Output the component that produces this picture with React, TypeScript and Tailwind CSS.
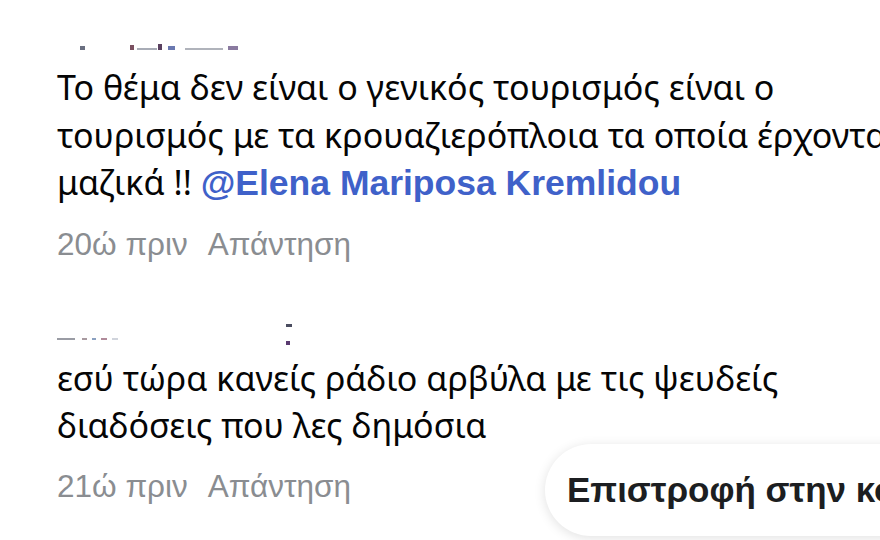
import React from 'react';

const body = { fontFamily: '"Noto Sans", "Open Sans", sans-serif' };
const arial = { fontFamily: '"Liberation Sans", Arial, sans-serif' };

function Meta({ time }: { time: string }) {
  return (
    <div className="flex items-center gap-[20px] text-[31.5px] leading-[36px] text-[#8a8d91]" style={arial}>
      <span>{time}</span>
      <span>Απάντηση</span>
    </div>
  );
}

// faint leftovers of a hidden author name
function Smudges({ marks }: { marks: [number, number, number, string][] }) {
  return (
    <div className="flex items-end">
      {marks.map(([gap, w, h, c], i) => (
        <span key={i} className="block" style={{ marginLeft: gap, width: w, height: h, background: c }} />
      ))}
    </div>
  );
}

export default function App() {
  return (
    <div className="relative w-[880px] h-[540px] overflow-hidden bg-white">
      <div className="pl-[57px] flex flex-col">
        <div className="h-[64px] flex flex-col justify-end pb-[14px]">
          <Smudges
            marks={[
              [23, 5, 4, '#6a6f80'],
              [45, 4, 5, '#7a5060'],
              [3, 20, 2, '#a8acb6'],
              [1, 4, 6, '#5a4060'],
              [6, 7, 4, '#6a78b0'],
              [10, 38, 2, '#b0b3bb'],
              [5, 10, 4, '#8a7aa0'],
            ]}
          />
        </div>
        <div className="text-[34px] leading-[47.5px] text-[#050505]" style={body}>
          <div className="whitespace-nowrap">Το θέμα δεν είναι ο γενικός τουρισμός είναι ο</div>
          <div className="whitespace-nowrap">τουρισμός με τα κρουαζιερόπλοια τα οποία έρχονται</div>
          <div className="whitespace-nowrap">
            μαζικά !!{' '}
            <span className="font-bold text-[35.5px] text-[#3f61c9]" style={arial}>@Elena Mariposa Kremlidou</span>
          </div>
        </div>
        <div className="mt-[18px]">
          <Meta time="20ώ πριν" />
        </div>

        <div className="h-[93px] flex items-end pb-[10px]">
          <div className="flex items-end">
            <div className="pb-[5px]">
              <Smudges
                marks={[
                  [0, 18, 2, '#9a9ca4'],
                  [7, 5, 2, '#a89aa0'],
                  [5, 4, 2, '#8aa0c0'],
                  [5, 6, 2, '#b08a9a'],
                  [5, 6, 2, '#d0d4dc'],
                ]}
              />
            </div>
            <div className="ml-[168px] flex flex-col gap-[14px]">
              <span className="block w-[6px] h-[3px] bg-[#4a4d60]" />
              <span className="block w-[4px] h-[4px] bg-[#5a3a70]" />
            </div>
          </div>
        </div>
        <div className="text-[34px] leading-[47.5px] text-[#050505]" style={body}>
          <div className="whitespace-nowrap">εσύ τώρα κανείς ράδιο αρβύλα με τις ψευδείς</div>
          <div className="whitespace-nowrap">διαδόσεις που λες δημόσια</div>
        </div>
        <div className="mt-[18px]">
          <Meta time="21ώ πριν" />
        </div>
      </div>

      <div
        className="absolute left-[545px] top-[444px] h-[92px] w-[400px] pl-[22px] flex items-center rounded-full bg-white shadow-[0_2px_12px_rgba(0,0,0,0.12)] text-[35px] font-bold text-[#1c1e21] whitespace-nowrap overflow-hidden"
        style={arial}
      >
        Επιστροφή στην κορυφή
      </div>
    </div>
  );
}
